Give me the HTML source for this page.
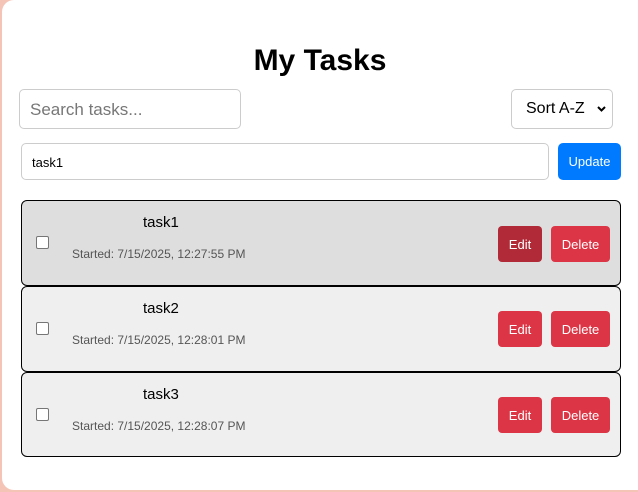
<!DOCTYPE html>
<html><head><style>
*{box-sizing:border-box;margin:0;padding:0}
html,body{width:638px;height:492px;overflow:hidden;background:#f4c4b6;font-family:"Liberation Sans",sans-serif}
.card{position:absolute;left:2px;top:0;width:660px;height:490px;background:#fff;border-radius:12px}
h1{position:absolute;left:0;width:640px;top:44px;text-align:center;font-size:30px;font-weight:bold;color:#000}
.inp{position:absolute;border:1px solid #ccc;border-radius:5px;background:#fff}
.btn{position:absolute;color:#fff;font-size:13px;border-radius:4px;display:flex;align-items:center;justify-content:center}
.item{position:absolute;left:21px;width:600px;height:86px;border:1px solid #000;border-radius:6px;background:#efefef}
.cb{position:absolute;left:14px;top:35px;width:13px;height:13px;border:1px solid #767676;border-radius:2px;background:#fff}
.t{position:absolute;left:121px;top:13px;font-size:15px;color:#000}
.s{position:absolute;left:50px;top:46px;font-size:12px;color:#555}
</style></head><body>
<div class="card"></div>
<h1>My Tasks</h1>
<div class="inp" style="left:19px;top:89px;width:222px;height:40px;font-size:17px;color:#777;padding:10px 0 0 10px">Search tasks...</div>
<div class="inp" style="left:511px;top:89px;width:102px;height:40px;font-size:16px;color:#000;padding:10px 0 0 14px">Sort A-Z <svg style="position:absolute;right:6px;top:16px" width="9" height="6" viewBox="0 0 9 6"><path d="M1 1l3.5 3.5L8 1" fill="none" stroke="#000" stroke-width="2"/></svg></div>
<div class="inp" style="left:21px;top:143px;width:528px;height:37px;font-size:13px;color:#000;padding:11px 0 0 10px">task1</div>
<div class="btn" style="left:558px;top:143px;width:63px;height:37px;background:#007bff;border-radius:5px">Update</div>

<div class="item" style="top:200px;background:#dedede"><div class="cb"></div><div class="t">task1</div><div class="s">Started: 7/15/2025, 12:27:55 PM</div></div>
<div class="btn" style="left:498px;top:226px;width:44px;height:36px;background:#b02a37">Edit</div>
<div class="btn" style="left:551px;top:226px;width:59px;height:36px;background:#dc3545">Delete</div>

<div class="item" style="top:286px"><div class="cb"></div><div class="t">task2</div><div class="s">Started: 7/15/2025, 12:28:01 PM</div></div>
<div class="btn" style="left:498px;top:311px;width:44px;height:36px;background:#dc3545">Edit</div>
<div class="btn" style="left:551px;top:311px;width:59px;height:36px;background:#dc3545">Delete</div>

<div class="item" style="top:372px;height:85px"><div class="cb"></div><div class="t">task3</div><div class="s">Started: 7/15/2025, 12:28:07 PM</div></div>
<div class="btn" style="left:498px;top:397px;width:44px;height:36px;background:#dc3545">Edit</div>
<div class="btn" style="left:551px;top:397px;width:59px;height:36px;background:#dc3545">Delete</div>
</body></html>
